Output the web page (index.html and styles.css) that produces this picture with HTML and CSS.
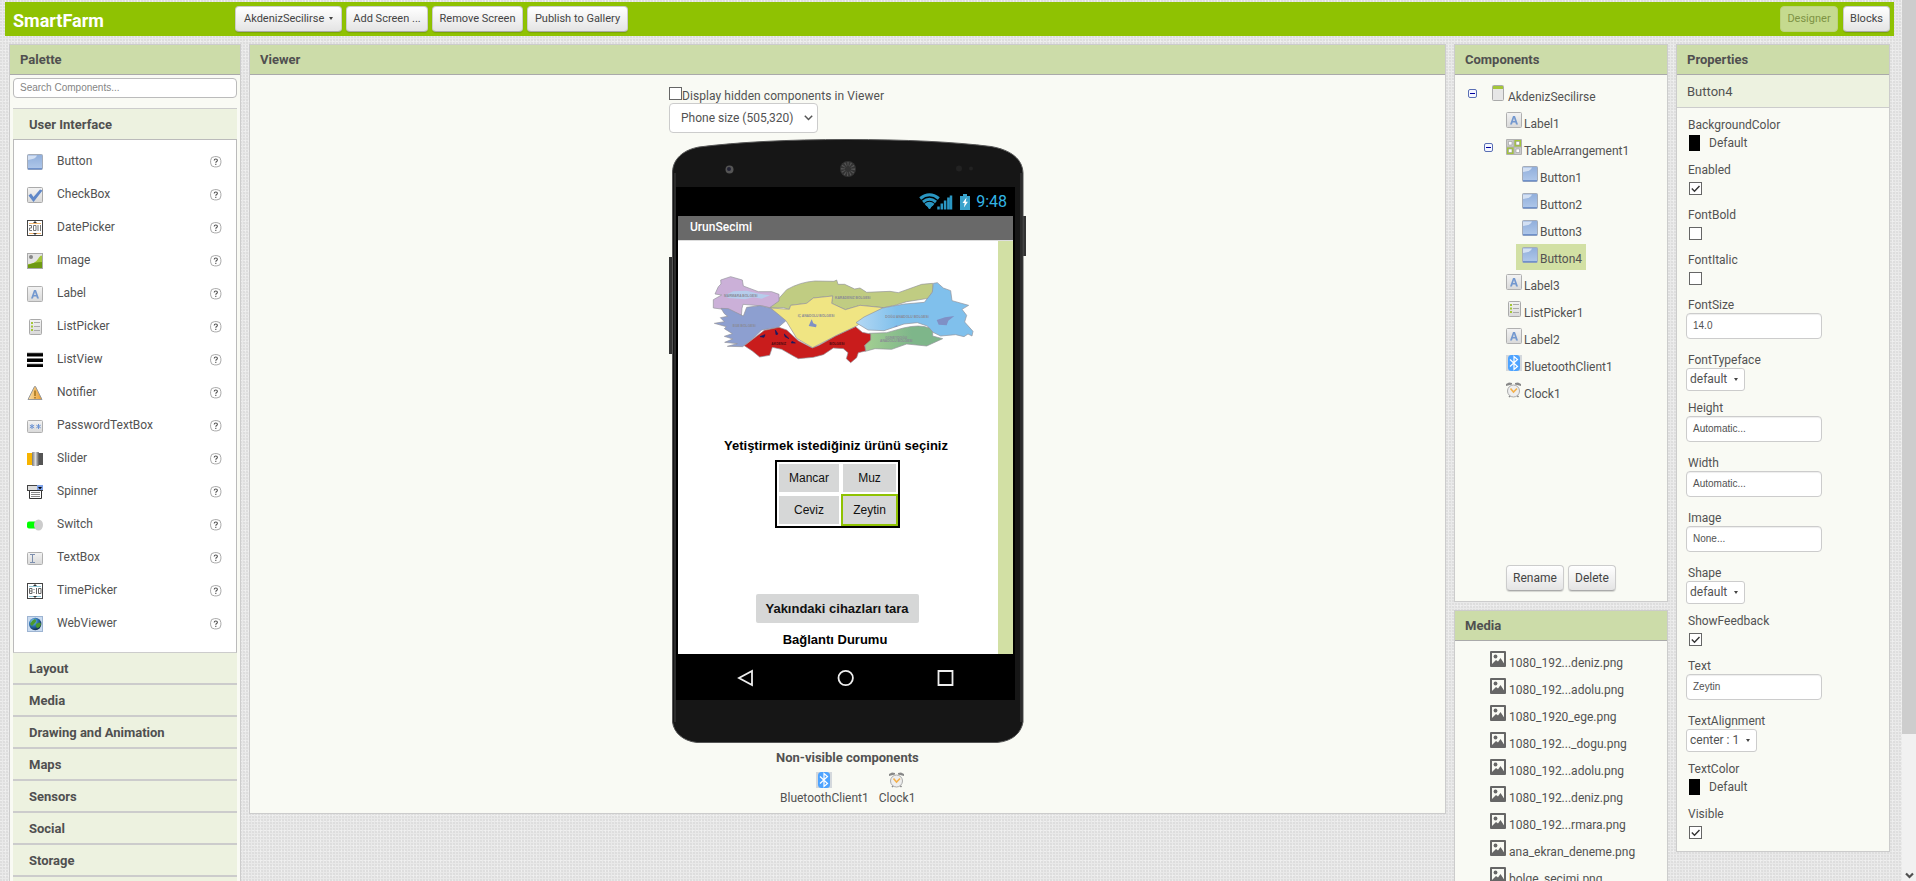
FILE: index.html
```html
<!DOCTYPE html>
<html lang="en">
<head>
<meta charset="utf-8">
<title>SmartFarm</title>
<link rel="stylesheet" href="styles.css">
</head>
<body>
<svg class="sprite" width="0" height="0" aria-hidden="true">
  <defs>
    <linearGradient id="gBlue" x1="0" y1="0" x2="0" y2="1"><stop offset="0" stop-color="#90aedb"/><stop offset="1" stop-color="#b0c8ea"/></linearGradient>
    <linearGradient id="gGrey" x1="0" y1="0" x2="0" y2="1"><stop offset="0" stop-color="#f3f3f3"/><stop offset="1" stop-color="#d9d9d9"/></linearGradient>
    <linearGradient id="gKnob" x1="0" y1="0" x2="1" y2="0"><stop offset="0" stop-color="#777"/><stop offset=".5" stop-color="#ddd"/><stop offset="1" stop-color="#555"/></linearGradient>
    <linearGradient id="gWarn" x1="0" y1="0" x2="1" y2="0"><stop offset="0" stop-color="#fbe0a8"/><stop offset="1" stop-color="#e89a2c"/></linearGradient>
    <linearGradient id="gEast" x1="0" y1="0" x2="1" y2="0"><stop offset="0" stop-color="#b4d8f4"/><stop offset=".35" stop-color="#80c0ec"/></linearGradient>
    <linearGradient id="gSouthEast" x1="0" y1="0" x2="1" y2="0"><stop offset="0" stop-color="#a3cf92"/><stop offset=".6" stop-color="#7eb68a"/></linearGradient>
    <radialGradient id="gGlobe" cx=".35" cy=".3" r=".8"><stop offset="0" stop-color="#9ad0e8"/><stop offset=".45" stop-color="#2f74b5"/><stop offset="1" stop-color="#0a1d38"/></radialGradient>
  </defs>
  <symbol id="i-button" viewBox="0 0 16 16"><rect x=".5" y=".5" width="15" height="15" rx="1" fill="url(#gBlue)" stroke="#a5acb8"/><path d="M1 1.500h9Q9 5 1 6z" fill="#d3e0f3"/><path d="M1 14h14v1.500H1z" fill="#6f91ca"/></symbol>
  <symbol id="i-check" viewBox="0 0 16 16"><rect x=".5" y=".5" width="15" height="15" rx="1" fill="url(#gGrey)" stroke="#aaa"/><path d="M1.500 8.500l2.500-2 2.500 3.500L13 2.500l2.500 1-9 11.500z" fill="#5f87c8"/></symbol>
  <symbol id="i-date" viewBox="0 0 16 16"><rect x=".5" y=".5" width="15" height="15" fill="#fff" stroke="#444"/><path d="M2 3.500h12M2 13.500h12" stroke="#f3b670"/><path d="M6 3l2-2 2 2zM6 13l2 2 2-2z" fill="#333"/><path d="M2 5.500h2.500v2.500H2.500v2.500H5M6.500 5.500h2.500v5h-2.500zM11 5v6M13.500 5v6" fill="none" stroke="#777"/></symbol>
  <symbol id="i-image" viewBox="0 0 16 16"><rect x=".5" y=".5" width="15" height="15" fill="#e4e4e4" stroke="#aaa"/><path d="M1 11Q8 11 11 6t4-3v12H1z" fill="#a4c639"/><path d="M1 12Q7 9 15 9v6H1z" fill="#6e9a12"/><circle cx="4" cy="4" r="2" fill="#888"/></symbol>
  <symbol id="i-label" viewBox="0 0 16 16"><rect x=".5" y=".5" width="15" height="15" rx="1" fill="url(#gGrey)" stroke="#b0b0b0"/><path d="M4 12.500L7 4h2l3 8.500h-2l-.6-2H6.600l-.6 2zM7.100 9h1.800L8 6z" fill="#7398cf"/></symbol>
  <symbol id="i-list" viewBox="0 0 16 16"><rect x="2.500" y=".5" width="12" height="15" rx="1" fill="url(#gGrey)" stroke="#aaa"/><path d="M4 3h2v2H4zM4 6.500h2v2H4zM4 10h2v2H4z" fill="#a4c639"/><path d="M7 3.500h6M7 7.500h6M7 11.500h6" stroke="#aaa"/></symbol>
  <symbol id="i-listview" viewBox="0 0 16 16"><path d="M0 1h16v3.500H0zM0 6.500h16V10H0zM0 12h16v3H0z" fill="#000"/><path d="M0 1h16M0 6.500h16M0 12h16" stroke="#777" stroke-width=".7"/></symbol>
  <symbol id="i-notifier" viewBox="0 0 16 16"><path d="M7.500 1.500h1L15 14.500H1z" fill="url(#gWarn)" stroke="#999"/><path d="M7.200 5.500h1.600V11H7.200zM7.200 12h1.600v1.500H7.200z" fill="#a67722"/></symbol>
  <symbol id="i-password" viewBox="0 0 16 16"><rect x=".5" y="2.500" width="15" height="12" rx="1" fill="url(#gGrey)" stroke="#b0b0b0"/><path d="M5 6v5M2.800 7.200l4.400 2.600M7.200 7.200L2.800 9.800M11.500 6v5M9.300 7.200l4.400 2.600M13.700 7.200L9.300 9.800" stroke="#6b93d4"/></symbol>
  <symbol id="i-slider" viewBox="0 0 16 16"><path d="M0 2h6v12H0z" fill="#f7b400"/><path d="M10 2h6v12h-6z" fill="#555"/><rect x="5" y="1" width="7" height="14" rx="1" fill="url(#gKnob)"/></symbol>
  <symbol id="i-spinner" viewBox="0 0 16 16"><rect x=".5" y="1.500" width="15" height="5" fill="#ddd" stroke="#444"/><path d="M10 1h6v5h-6z" fill="#7ea2e8"/><path d="M11 3h4l-2 2.500z" fill="#000"/><path d="M2.500 6.500h12v8h-12z" fill="#fff" stroke="#333"/><path d="M4 8.500h9M4 10.500h9M4 12.500h9" stroke="#888"/></symbol>
  <symbol id="i-switch" viewBox="0 0 16 16"><rect x="0" y="4.500" width="12" height="7" rx="2" fill="#0f0"/><ellipse cx="11.500" cy="8" rx="4.500" ry="5.500" fill="#ccc"/></symbol>
  <symbol id="i-textbox" viewBox="0 0 16 16"><rect x=".5" y="2.500" width="15" height="12" rx="1" fill="url(#gGrey)" stroke="#b0b0b0"/><path d="M3 4.500h5M5.500 4.500v8M3 12.500h5" stroke="#7d8fae"/></symbol>
  <symbol id="i-time" viewBox="0 0 16 16"><rect x=".5" y=".5" width="15" height="15" fill="#fff" stroke="#444"/><path d="M2 3.500h12M2 13.500h12" stroke="#8fc7d8"/><path d="M6 3l2-2 2 2zM6 13l2 2 2-2z" fill="#333"/><path d="M2.500 5.500h2.500v5H2.500zM2.500 8h2.500M7 6v1M7 9v1M9.500 5v6M11.500 5.500H14v5h-2.500z" fill="none" stroke="#666"/></symbol>
  <symbol id="i-web" viewBox="0 0 16 16"><rect x=".5" y=".5" width="15" height="15" fill="#c9dbf0" stroke="#9db4d2"/><circle cx="8.200" cy="8" r="6.200" fill="url(#gGlobe)"/><path d="M3 8q2-4 5-5 2 2 0 4t-3 3zM9 8q4-3 5 0-1 4-4 4-2-2-1-4z" fill="#4b9a2c"/></symbol>
  <symbol id="i-screen" viewBox="0 0 12 16"><rect x=".5" y=".5" width="11" height="15" rx="1" fill="#e6e6e6" stroke="#aaa"/><path d="M1 1h10v3H1z" fill="#a4c639"/></symbol>
  <symbol id="i-table" viewBox="0 0 16 16"><rect width="16" height="16" rx="1" fill="#b0b0b0"/><path d="M8.500 1H15v6.500H8.500zM1 8.500h6.500V15H1z" fill="#a4c639"/><path d="M1 1h6.500v6.500H1zM8.500 8.500H15V15H8.500z" fill="#ccc"/><path d="M2.500 2.500h3.500v3.500H2.500zM10 2.500h3.500v3.500H10zM2.500 10h3.500v3.500H2.500zM10 10h3.500v3.500H10z" fill="#fff" stroke="#999" stroke-width=".6"/></symbol>
  <symbol id="i-bt" viewBox="0 0 16 16"><path d="M0 0h16v16H0z" fill="#d4d8dc"/><rect x="2" y="0" width="12" height="16" rx="3.500" fill="#4da3ff"/><path d="M4 4.500l7.500 7L8 14.500v-13l3.500 3L4 11.500" fill="none" stroke="#fff" stroke-width="1.200"/></symbol>
  <symbol id="i-clock" viewBox="0 0 16 16"><path d="M0 4V2l3-1.500 3 .5v1.500zM15 4V2l-3-1.500L9 1v1.500z" fill="#888"/><path d="M3 15l2-2M12.500 15l-2-2" stroke="#888" stroke-width="1.500"/><circle cx="7.500" cy="9" r="6" fill="#eee" stroke="#aaa"/><path d="M4.500 6.500l3 3.500L11 6.500" fill="none" stroke="#f3b04c" stroke-width="1.600"/></symbol>
  <symbol id="i-file" viewBox="0 0 16 16"><rect width="16" height="16" rx="1" fill="#666"/><path d="M2 2h12v10.500L10.500 7 8 10.500 6 9l-4 4z" fill="#f9faf4"/><circle cx="5.500" cy="5.500" r="1.900" fill="#666"/><path d="M3 13l3-3 2 2 2.500-4 3.500 5z" fill="#666"/></symbol>
  <symbol id="i-help" viewBox="0 0 12 12"><rect x=".6" y=".6" width="10.300" height="10.300" rx="4" fill="#fff" stroke="#aaa"/><path d="M4.200 4.500q0-1.500 1.600-1.500t1.600 1.300q0 .7-.8 1.200t-.8 1.300M5.800 7.800v1.200" fill="none" stroke="#555" stroke-width="1.100"/></symbol>
  <symbol id="i-minus" viewBox="0 0 9 9"><rect x=".5" y=".5" width="8" height="8" rx="1.500" fill="#f4f6ff" stroke="#5a6fb4"/><path d="M2 4.500h5" stroke="#0000a0"/></symbol>
  <symbol id="i-box" viewBox="0 0 13 13"><rect x=".5" y=".5" width="12" height="12" fill="#fff" stroke="#666"/></symbol>
  <symbol id="i-boxon" viewBox="0 0 13 13"><rect x=".5" y=".5" width="12" height="12" fill="#fff" stroke="#666"/><path d="M2.800 6.500l2.700 2.700L10.500 4" fill="none" stroke="#333" stroke-width="1.400"/></symbol>
</svg>

<header class="topbar">
  <h1 class="project">SmartFarm</h1>
  <div class="topbar-actions">
    <button class="btn b1">AkdenizSecilirse <i class="caret"></i></button>
    <button class="btn b2">Add Screen ...</button>
    <button class="btn b3">Remove Screen</button>
    <button class="btn b4">Publish to Gallery</button>
  </div>
  <div class="topbar-modes">
    <button class="btn b5 disabled">Designer</button>
    <button class="btn b6">Blocks</button>
  </div>
</header>

<main class="workspace">
  <section class="panel palette">
    <h2 class="panel-title">Palette</h2>
    <div class="palette-body">
      <div class="search">Search Components...</div>
      <div class="drawer-title open">User Interface</div>
      <ul class="drawer">
        <li><svg><use href="#i-button"/></svg><span>Button</span><svg class="help"><use href="#i-help"/></svg></li>
        <li><svg><use href="#i-check"/></svg><span>CheckBox</span><svg class="help"><use href="#i-help"/></svg></li>
        <li><svg><use href="#i-date"/></svg><span>DatePicker</span><svg class="help"><use href="#i-help"/></svg></li>
        <li><svg><use href="#i-image"/></svg><span>Image</span><svg class="help"><use href="#i-help"/></svg></li>
        <li><svg><use href="#i-label"/></svg><span>Label</span><svg class="help"><use href="#i-help"/></svg></li>
        <li><svg><use href="#i-list"/></svg><span>ListPicker</span><svg class="help"><use href="#i-help"/></svg></li>
        <li><svg><use href="#i-listview"/></svg><span>ListView</span><svg class="help"><use href="#i-help"/></svg></li>
        <li><svg><use href="#i-notifier"/></svg><span>Notifier</span><svg class="help"><use href="#i-help"/></svg></li>
        <li><svg><use href="#i-password"/></svg><span>PasswordTextBox</span><svg class="help"><use href="#i-help"/></svg></li>
        <li><svg><use href="#i-slider"/></svg><span>Slider</span><svg class="help"><use href="#i-help"/></svg></li>
        <li><svg><use href="#i-spinner"/></svg><span>Spinner</span><svg class="help"><use href="#i-help"/></svg></li>
        <li><svg><use href="#i-switch"/></svg><span>Switch</span><svg class="help"><use href="#i-help"/></svg></li>
        <li><svg><use href="#i-textbox"/></svg><span>TextBox</span><svg class="help"><use href="#i-help"/></svg></li>
        <li><svg><use href="#i-time"/></svg><span>TimePicker</span><svg class="help"><use href="#i-help"/></svg></li>
        <li><svg><use href="#i-web"/></svg><span>WebViewer</span><svg class="help"><use href="#i-help"/></svg></li>
      </ul>
      <div class="drawer-title">Layout</div>
      <div class="drawer-title">Media</div>
      <div class="drawer-title">Drawing and Animation</div>
      <div class="drawer-title">Maps</div>
      <div class="drawer-title">Sensors</div>
      <div class="drawer-title">Social</div>
      <div class="drawer-title">Storage</div>
      <div class="drawer-title"></div>
    </div>
  </section>

  <section class="panel viewer">
    <h2 class="panel-title">Viewer</h2>
    <div class="viewer-body">
      <div class="hidden-toggle"><svg class="cb"><use href="#i-box"/></svg>Display hidden components in Viewer</div>
      <div class="size-select">Phone size (505,320)<svg width="9" height="6" viewBox="0 0 9 6"><path d="M.8.800l3.700 3.700L8.200.8" fill="none" stroke="#555" stroke-width="1.500"/></svg></div>
      <div class="phone">
        <svg class="phone-shell" width="357" height="605" viewBox="0 0 357 605">
          <path d="M0 118h4v97H0zM353 77h4v40h-4z" fill="#333"/>
          <path d="M3.500 33C4 20 14 11 30 8Q90 .5 178 .5T322 7.500C342 11 353.500 20 354 34V583C352 594 344 602 328 603.500H28C14 602 5 594 3.500 583z" fill="#161616" stroke="#555"/>
          <path d="M6 34V583M352 34V583" stroke="#2c2c2c" stroke-width="2"/>
          <circle cx="60.500" cy="30.500" r="4" fill="#555"/><circle cx="60" cy="30" r="2" fill="#223"/>
          <circle cx="179" cy="30" r="8" fill="#333"/><circle cx="179" cy="30" r="5" fill="none" stroke="#555" stroke-dasharray="1 1.500" stroke-width="4"/>
          <circle cx="290" cy="29.500" r="3" fill="#222"/><circle cx="302" cy="29.500" r="2" fill="#222"/>
        </svg>
        <div class="screen">
          <div class="status">
            <svg width="52" height="18" viewBox="0 0 52 18" fill="none" stroke="#2a96c2">
              <path d="M10.500 16L8 12.500q2.500-2 5 0z" fill="#2a96c2"/>
              <path d="M1.200 5.500Q10.500-2 19.800 5.500M4 9Q10.500 3.600 17 9M6.500 12Q10.500 8.500 14.500 12" stroke-width="3"/>
              <path d="M19.500 16.500v-3M22.800 16.500v-6M26.100 16.500v-9M29.400 16.500v-12M32 16.500v-14" stroke-width="2.500"/>
              <path d="M41 3h3V1h4v2h3v14H41z" fill="#3aa3cc" stroke="none"/><path d="M47.500 4.500l-4 5.500h2.200l-.8 4.500 4-5.800h-2.200z" fill="#fff" stroke="none"/>
            </svg>
            <span>9:48</span>
          </div>
          <div class="app-title">UrunSecimi</div>
          <div class="app-body">
            <div class="app-content">
              <svg class="map" width="320" height="179" viewBox="54 33 960 537" stroke="#93939a" stroke-width="2">
                <path d="M330 215L355 207 380 179Q420 156 465 153L522 154 530 150 534 163 554 163 584 177 600 174 620 187 690 184 715 188 785 163 818 160 820 180 805 205 740 215 705 226 670 233 600 226 556 239 515 220 518 198 460 204 440 220 392 226 388 238 370 233 330 234z" fill="#c0cc82"/>
                <path d="M182 150l30-10 35 10 3 18 45 17 40 0 22 8v20l-28 20-20-5-60-5-3 12-2 24-60-22-24-3v-25l25-14-20-3 10-22 8-8z" fill="#cbb0d8"/>
                <path d="M195 196l25-12 40-2 30 8 40 6-25 10-25-4-25 6-50-4z" fill="#b6cdec" stroke="none"/>
                <path d="M183 235l22 1 45 22 10-26 40-5 30 7 30 20 18 18-23 20-50 8-22 22-35 28-46-1 30-8-38-4 24-10-25-8 24-8-24-15 6-6-36-10 30-5-12-12 22-4-10-8z" fill="#8d9fd0"/>
                <path d="M332 234L388 238 392 226 440 220 460 204 518 198 515 220 556 239 600 226 670 233 668 246 612 273 586 290 530 316 458 353 410 325 378 272z" fill="#f0e583"/>
                <path d="M820 160l12-2 18 16 22 8 4 30 50 14-20 12 14 18-6 20 25 28-3 14-12-6-12 8-25-6-45 4-25-12-15-18-30-10-40 4-60 20-48-2-36-22 24-17 56-27 65-12 60-5 24-30z" fill="url(#gEast)"/>
                <path d="M628 310l52-2 50-14q50-12 78 0l10 12v12l30 8-48 22-60-6-45 16-50-2-29 8v-25l15-12z" fill="url(#gSouthEast)"/>
                <path d="M357 292l23 8 35 32 42 22 20-8 50-28 60-28 20 17 25 5v18l-18 16 3 17-22 5-5 15-18 15-13-12 5-18-14-12-30-2-30 20-30 8-45 4-15-8-35-20-28-6-8 24-30 5-22-18-24-16 60-46z" fill="#c91c1c"/>
                <path d="M300 320l15-6-3 8zM346 300l8 12-6 2zM373 312l14 14-12-6zM396 334l10 5h-12z" fill="#1a1a60" stroke="#1a1a60"/>
                <path d="M455 268l5 12 10 4-2 8-22-4zM830 270l25-8 28-4-18 14-5 14-24-2zM702 290l8-4 2 4z" fill="#7f90c5" stroke="none"/>
                <g fill="#8a8a96" stroke="none" class="map-text"><text x="192" y="200">MARMARA BÖLGESİ</text><text x="218" y="290">EGE BÖLGESİ</text><text x="525" y="206">KARADENİZ BÖLGESİ</text><text x="413" y="261">İÇ ANADOLU BÖLGESİ</text><text x="676" y="265">DOĞU ANADOLU BÖLGESİ</text><text x="676" y="326">GÜNEYDOĞU</text><text x="660" y="336">ANADOLU BÖLGESİ</text></g>
                <g fill="#4c0a12" stroke="none" class="map-text"><text x="334" y="346">AKDENİZ</text><text x="508" y="346">BÖLGESİ</text></g>
              </svg>
              <p class="app-label first">Yetiştirmek istediğiniz ürünü seçiniz</p>
              <div class="table">
                <div class="cell">Mancar</div><div class="cell">Muz</div>
                <div class="cell">Ceviz</div><div class="cell selected">Zeytin</div>
              </div>
              <div class="scan">Yakındaki cihazları tara</div>
              <p class="app-label second">Bağlantı Durumu</p>
            </div>
          </div>
          <svg class="nav" width="339" height="46" viewBox="0 0 339 46" fill="none" stroke="#eee" stroke-width="1.800"><path d="M76 17v14L63 24zM262.500 17h14v14h-14z"/><circle cx="169.700" cy="24" r="7.200"/></svg>
        </div>
      </div>
      <div class="nonvisible">
        <b>Non-visible components</b>
        <div class="nv-list">
          <div><svg><use href="#i-bt"/></svg><span>BluetoothClient1</span></div>
          <div><svg><use href="#i-clock"/></svg><span>Clock1</span></div>
        </div>
      </div>
    </div>
  </section>

  <div class="column">
    <section class="panel components">
      <h2 class="panel-title">Components</h2>
      <ul class="tree">
        <li class="l0"><svg class="toggle"><use href="#i-minus"/></svg><svg class="scr"><use href="#i-screen"/></svg><span>AkdenizSecilirse</span></li>
        <li class="l1"><svg><use href="#i-label"/></svg><span>Label1</span></li>
        <li class="l1t"><svg class="toggle"><use href="#i-minus"/></svg><svg><use href="#i-table"/></svg><span>TableArrangement1</span></li>
        <li class="l2"><svg><use href="#i-button"/></svg><span>Button1</span></li>
        <li class="l2"><svg><use href="#i-button"/></svg><span>Button2</span></li>
        <li class="l2"><svg><use href="#i-button"/></svg><span>Button3</span></li>
        <li class="l2 active"><svg><use href="#i-button"/></svg><span>Button4</span></li>
        <li class="l1"><svg><use href="#i-label"/></svg><span>Label3</span></li>
        <li class="l1"><svg><use href="#i-list"/></svg><span>ListPicker1</span></li>
        <li class="l1"><svg><use href="#i-label"/></svg><span>Label2</span></li>
        <li class="l1"><svg><use href="#i-bt"/></svg><span>BluetoothClient1</span></li>
        <li class="l1"><svg><use href="#i-clock"/></svg><span>Clock1</span></li>
      </ul>
      <div class="tree-actions"><button class="btn b7">Rename</button><button class="btn b8">Delete</button></div>
    </section>
    <section class="panel media">
      <h2 class="panel-title">Media</h2>
      <ul class="tree files">
        <li><svg><use href="#i-file"/></svg><span>1080_192...deniz.png</span></li>
        <li><svg><use href="#i-file"/></svg><span>1080_192...adolu.png</span></li>
        <li><svg><use href="#i-file"/></svg><span>1080_1920_ege.png</span></li>
        <li><svg><use href="#i-file"/></svg><span>1080_192..._dogu.png</span></li>
        <li><svg><use href="#i-file"/></svg><span>1080_192...adolu.png</span></li>
        <li><svg><use href="#i-file"/></svg><span>1080_192...deniz.png</span></li>
        <li><svg><use href="#i-file"/></svg><span>1080_192...rmara.png</span></li>
        <li><svg><use href="#i-file"/></svg><span>ana_ekran_deneme.png</span></li>
        <li><svg><use href="#i-file"/></svg><span>bolge_secimi.png</span></li>
      </ul>
    </section>
  </div>

  <section class="panel properties">
    <h2 class="panel-title">Properties</h2>
    <div class="prop-target">Button4</div>
    <div class="props">
      <div class="prop"><label>BackgroundColor</label><div class="color"><i></i>Default</div></div>
      <div class="prop"><label>Enabled</label><svg class="cb"><use href="#i-boxon"/></svg></div>
      <div class="prop"><label>FontBold</label><svg class="cb"><use href="#i-box"/></svg></div>
      <div class="prop"><label>FontItalic</label><svg class="cb"><use href="#i-box"/></svg></div>
      <div class="prop tall"><label>FontSize</label><div class="field">14.0</div></div>
      <div class="prop mid"><label>FontTypeface</label><div class="select">default<i class="caret"></i></div></div>
      <div class="prop tall"><label>Height</label><div class="field">Automatic...</div></div>
      <div class="prop tall"><label>Width</label><div class="field">Automatic...</div></div>
      <div class="prop tall"><label>Image</label><div class="field">None...</div></div>
      <div class="prop mid"><label>Shape</label><div class="select">default<i class="caret"></i></div></div>
      <div class="prop"><label>ShowFeedback</label><svg class="cb"><use href="#i-boxon"/></svg></div>
      <div class="prop tall"><label>Text</label><div class="field">Zeytin</div></div>
      <div class="prop mid"><label>TextAlignment</label><div class="select wide">center : 1<i class="caret"></i></div></div>
      <div class="prop"><label>TextColor</label><div class="color"><i></i>Default</div></div>
      <div class="prop"><label>Visible</label><svg class="cb"><use href="#i-boxon"/></svg></div>
    </div>
  </section>
</main>

<div class="scrollbar"><div class="thumb"></div><svg width="9" height="8" viewBox="0 0 9 8"><path d="M1 1.500L4.500 5 8 1.500" fill="none" stroke="#505050" stroke-width="2.200"/></svg></div>
</body>
</html>
```
FILE: styles.css
```css
* { box-sizing: border-box; }

body {
  margin: 0;
  width: 1916px;
  height: 881px;
  overflow: hidden;
  position: relative;
  padding: 2px 0 0 5px;
  font: 12px/16px Roboto, sans-serif;
  color: #525252;
  background-color: #e9e9e9;
  background-image:
    radial-gradient(circle at 1px 1px, #dedede .7px, transparent 1px),
    radial-gradient(circle at 1px 1px, #f0f0f0 .7px, transparent 1px);
  background-size: 3px 3px, 4px 5px;
}

h1, h2, p, ul { margin: 0; padding: 0; }
ul { list-style: none; }
svg { display: block; flex: none; }
.sprite { position: absolute; }

.topbar {
  width: 1889px;
  height: 34px;
  background: #8fc202;
  display: flex;
  padding: 4px 4px 0 8px;
}
.project { width: 222px; font-size: 18px; line-height: 30px; color: #fff; }
.topbar-actions { display: flex; gap: 4px; }
.topbar-modes { display: flex; gap: 5px; margin-left: auto; }

.btn {
  height: 26px;
  padding: 0;
  border: 1px solid #ccc;
  border-bottom-color: #aaa;
  border-radius: 4px;
  background: linear-gradient(#fff, #e4e4e4);
  box-shadow: 0 1px 1px rgba(0, 0, 0, .15);
  font: 11px/16px Roboto, sans-serif;
  color: #444;
}
.btn.disabled { background: #c5da8f; border-color: #bcd180; color: #7e9345; box-shadow: none; }
.b1 { width: 107px; }
.b2 { width: 82px; }
.b3 { width: 91px; }
.b4 { width: 101px; }
.b5 { width: 58px; }
.b6 { width: 47px; }
.b7, .b8 { font-size: 12px; }
.b7 { width: 58px; }
.b8 { width: 48px; }
.caret {
  display: inline-block;
  border: 2px solid transparent;
  border-top: 3px solid #444;
  border-bottom: 0;
  margin-left: 2px;
  vertical-align: 2px;
}

.workspace { display: flex; gap: 8px; padding: 8px 0 0 4px; align-items: flex-start; }
.panel { background: #f9faf4; border: 1px solid #ccc; }
.panel-title {
  height: 30px;
  padding-left: 10px;
  background: #ccdca9;
  border-bottom: 1px solid #aaa;
  font-size: 13px;
  line-height: 29px;
  color: #505050;
}
.column { width: 214px; display: flex; flex-direction: column; gap: 8px; }

.palette { width: 232px; height: 860px; }
.palette-body { padding: 3px 3px 0; }
.search {
  height: 20px;
  padding-left: 6px;
  border: 1px solid #bbb;
  border-radius: 4px;
  background: #fff;
  font: 10px/18px "Liberation Sans", sans-serif;
  color: #858585;
}
.drawer-title {
  height: 32px;
  padding-left: 16px;
  background: #edf2e0;
  border-bottom: 2px solid #ccc;
  font-weight: bold;
  font-size: 13px;
  line-height: 31px;
  color: #505050;
}
.drawer-title.open { margin-top: 10px; height: 31px; border-top: 1px solid #ccc; border-bottom: 0; }
.drawer {
  height: 514px;
  padding: 5px 14px 0 13px;
  background: #fff;
  border: 1px solid #bbb;
  border-bottom-color: #ccc;
}
.drawer li { height: 33px; display: flex; align-items: center; }
.drawer li svg { width: 16px; height: 16px; }
.drawer li span { margin: -2px 0 0 14px; }
.drawer li .help { width: 12px; height: 12px; margin-left: auto; }

.viewer { width: 1197px; height: 770px; }
.viewer-body { padding: 12px 0 0 419px; }
.hidden-toggle { display: flex; height: 16px; line-height: 18px; letter-spacing: .07px; }
.cb { width: 13px; height: 13px; }
.size-select {
  width: 149px;
  height: 30px;
  padding: 0 4px 0 11px;
  display: flex;
  align-items: center;
  justify-content: space-between;
  border: 1px solid #ccc;
  border-radius: 4px;
  background: #fff;
}
.phone { position: relative; width: 357px; height: 605px; margin-top: 6px; padding: 48px 0 0 7px; }
.phone-shell { position: absolute; left: 0; top: 0; }
.screen { position: relative; width: 339px; height: 513px; background: #000; }
.status { height: 29px; display: flex; align-items: center; justify-content: flex-end; gap: 5px; padding: 1px 8px 0 0; }
.status span { font-size: 16px; color: #33b5e5; }
.app-title {
  margin: 0 2px;
  height: 25px;
  padding-left: 12px;
  background: #696969;
  border-bottom: 1px solid #ddd;
  color: #fff;
  line-height: 22px;
  font-weight: 500;
}
.app-body { margin: 0 2px; height: 413px; padding-right: 15px; background: #d2e0a4; }
.app-content {
  height: 413px;
  background: #fff;
  display: flex;
  flex-direction: column;
  align-items: center;
  font-family: "Liberation Sans", sans-serif;
  color: #111;
}
.map-text { font: bold 10px "Liberation Sans", sans-serif; }
.app-label { font-size: 13px; font-weight: bold; color: #000; line-height: 16px; }
.app-label.first { margin: 18px 4px 0 0; height: 22px; }
.app-label.second { margin: 9px 6px 0 0; }
.table {
  width: 125px;
  height: 68px;
  display: grid;
  grid-template-columns: 64px 57px;
  grid-template-rows: 32px 32px;
  border: 2px solid #000;
  margin-right: 1px;
}
.cell {
  border: 2px solid #fff;
  background: #d6d7d7;
  text-align: center;
  line-height: 29px;
}
.cell.selected { border-color: #8fc202; }
.scan {
  width: 163px;
  height: 29px;
  margin: 66px 2px 0 0;
  background: #d6d7d7;
  border-radius: 2px;
  text-align: center;
  font-size: 13px;
  font-weight: bold;
  line-height: 29px;
}

.nonvisible { width: 357px; padding-top: 6px; }
.nonvisible b { display: block; padding-left: 107px; font-size: 13px; }
.nv-list { display: flex; gap: 10px; padding: 6px 0 0 111px; }
.nv-list div { display: flex; flex-direction: column; align-items: center; gap: 2px; }
.nv-list svg { width: 16px; height: 16px; }

.components { height: 558px; }
.tree { padding-top: 9px; }
.tree li { height: 27px; display: flex; align-items: flex-start; width: max-content; }
.tree li svg { width: 16px; height: 16px; margin-top: 1px; }
.tree li span { margin: 5px 0 0 2px; }
.tree li .toggle { width: 9px; height: 9px; margin-top: 5px; }
.tree li .scr { width: 12px; margin: 1px 2px 0 15px; }
.tree .l0 { padding-left: 13px; }
.tree .l1 { padding-left: 51px; }
.tree .l1t { padding-left: 29px; }
.tree .l1t .toggle { margin-right: 13px; }
.tree .l2 { padding-left: 67px; }
.tree .active { height: 26px; margin: -2px 0 3px 61px; padding: 2px 4px 0 6px; background: #d2e0a4; }
.tree-actions { display: flex; gap: 4px; padding: 157px 0 0 51px; }

.media { height: 300px; }
.files { padding: 9px 0 0 35px; }
.files li span { margin-left: 3px; }

.properties { width: 214px; height: 808px; }
.prop-target { height: 33px; padding-left: 10px; background: #edf2e0; border-bottom: 1px solid #ccc; font-size: 13px; line-height: 33px; }
.props { padding: 9px 0 0 9px; }
.prop { height: 45px; }
.prop.tall { height: 55px; }
.prop.mid { height: 48px; }
.prop label { display: block; height: 16px; padding-left: 2px; }
.prop .cb { margin: 4px 0 0 3px; }
.color { display: flex; gap: 9px; padding: 2px 0 0 3px; line-height: 16px; }
.color i { width: 11px; height: 16px; background: #000; }
.field {
  width: 136px;
  height: 26px;
  padding-left: 6px;
  border: 1px solid #ccc;
  border-radius: 4px;
  background: #fff;
  box-shadow: inset 0 1px 1px #eee;
  font: 10px/24px "Liberation Sans", sans-serif;
}
.select { width: 59px; height: 23px; padding-left: 3px; border: 1px solid #ccc; border-radius: 3px; background: #fff; line-height: 20px; }
.select.wide { width: 71px; }
.select .caret { margin-left: 7px; }

.scrollbar { position: absolute; right: 0; top: 0; width: 14px; height: 881px; background: #f1f1f1; }
.thumb { height: 734px; background: #cdcdcd; }
.scrollbar svg { margin: 138px 0 0 3px; }
```
